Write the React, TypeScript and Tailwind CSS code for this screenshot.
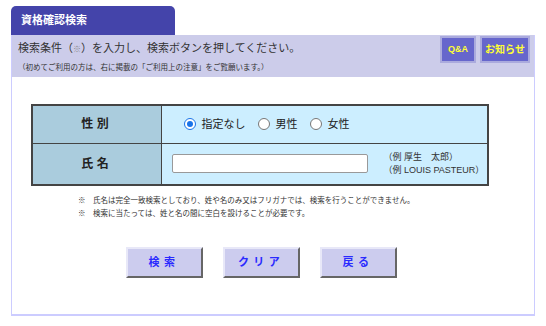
import { useState } from 'react';

const font = { fontFamily: '"Liberation Sans", "Noto Sans CJK JP", sans-serif' };

const Radio = ({ checked, label, onClick }: { checked: boolean; label: string; onClick: () => void }) => (
  <label className="flex cursor-pointer items-center gap-[6px]" onClick={onClick}>
    <span
      className={
        'flex h-[12px] w-[12px] items-center justify-center rounded-full border ' +
        (checked ? 'border-[#1a73e8] bg-white' : 'border-[#777] bg-white')
      }
    >
      {checked && <span className="h-[6px] w-[6px] rounded-full bg-[#1a73e8]" />}
    </span>
    <span>{label}</span>
  </label>
);

const ActionButton = ({ label }: { label: string }) => (
  <button className="h-[31px] w-[77px] border-2 border-t-[#e8e8f8] border-l-[#e8e8f8] border-r-[#666] border-b-[#666] bg-[#ccccee] text-[11px] font-bold tracking-[0.4em] text-[#2a2aff]">
    {label}
  </button>
);

export default function App() {
  const [sex, setSex] = useState('none');

  return (
    <div className="h-[326px] w-[546px] bg-white text-[#222]" style={font}>
      <div className="pl-[11px] pr-[11px] pt-[6px]">
        {/* Tab */}
        <div className="flex h-[29px] w-[164px] items-center rounded-t-[5px] bg-[#4444aa] pl-[10px] text-[11px] font-bold text-white">
          資格確認検索
        </div>

        <div className="border-x border-b-2 border-[#ccccff]">
          {/* Info band */}
          <div className="flex h-[42px] justify-between bg-[#ccccea] pl-[6px] pr-[4px]">
            <div>
              <div className="pt-[5px] text-[11px] leading-[16px] text-[#333]">
                検索条件（<span className="text-[8px] text-[#888]">※</span>）を入力し、検索ボタンを押してください。
              </div>
              <div className="pt-[4px] text-[7.5px] leading-[12px] text-[#333]">
                （初めてご利用の方は、右に掲載の「ご利用上の注意」をご覧願います。）
              </div>
            </div>
            <div className="flex gap-[4px] pt-[1px]">
              <button className="h-[27px] w-[36px] border-2 border-[#aaaadd] bg-[#6666cc] text-[9px] font-bold text-[#ffff33]">
                Q&amp;A
              </button>
              <button className="h-[27px] w-[50px] border-2 border-[#aaaadd] bg-[#6666cc] text-[10px] font-bold text-[#ffff33]">
                お知らせ
              </button>
            </div>
          </div>

          {/* Form */}
          <div className="px-[19px] pt-[27px] pb-[36px]">
            <table className="w-[458px] border-collapse border-2 border-[#444] text-[12px]">
              <tbody>
                <tr className="h-[38px]">
                  <th className="w-[129px] border border-[#444] bg-[#aaccdd] font-bold tracking-[0.3em]">性別</th>
                  <td className="border border-[#444] bg-[#cceeff] pl-[22px]">
                    <div className="flex items-center gap-[12px] text-[11px]">
                      <Radio checked={sex === 'none'} label="指定なし" onClick={() => setSex('none')} />
                      <Radio checked={sex === 'm'} label="男性" onClick={() => setSex('m')} />
                      <Radio checked={sex === 'f'} label="女性" onClick={() => setSex('f')} />
                    </div>
                  </td>
                </tr>
                <tr className="h-[42px]">
                  <th className="border border-[#444] bg-[#aaccdd] font-bold tracking-[0.3em]">氏名</th>
                  <td className="border border-[#444] bg-[#cceeff] pl-[10px]">
                    <div className="flex items-center">
                      <input className="h-[19px] w-[196px] rounded-[2px] border border-[#999] bg-white px-1 text-[12px]" />
                      <div className="ml-[16px] text-[9px] leading-[13px] text-[#333]">
                        <div>（例 厚生　太郎）</div>
                        <div>（例 LOUIS PASTEUR）</div>
                      </div>
                    </div>
                  </td>
                </tr>
              </tbody>
            </table>

            <div className="mt-[8px] pl-[47px] text-[7.5px] leading-[13px] text-[#333]">
              <div>※　氏名は完全一致検索としており、姓や名のみ又はフリガナでは、検索を行うことができません。</div>
              <div>※　検索に当たっては、姓と名の間に空白を設けることが必要です。</div>
            </div>

            <div className="mt-[27px] flex justify-center gap-[20px] pr-[24px]">
              <ActionButton label="検索" />
              <ActionButton label="クリア" />
              <ActionButton label="戻る" />
            </div>
          </div>
        </div>
      </div>
    </div>
  );
}
